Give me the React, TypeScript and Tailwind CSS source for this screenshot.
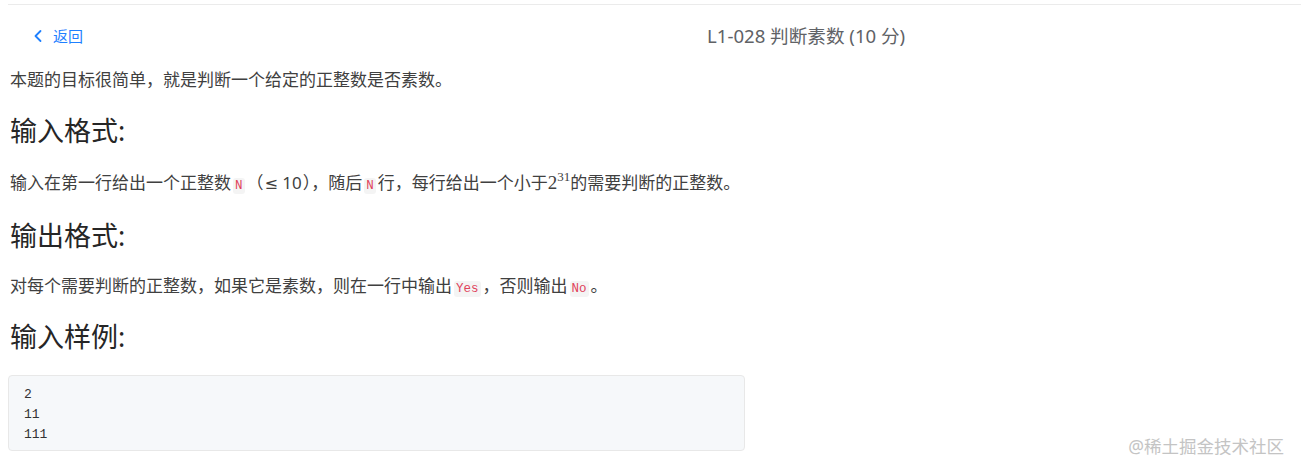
import { ChevronLeft } from 'lucide-react';

const cjk = { fontFamily: '"Noto Sans", "Noto Sans CJK SC", sans-serif' };

function Code({ children }: { children: React.ReactNode }) {
  return (
    <code className="mx-[2px] rounded-[3px] bg-[#f4f4f4] px-[2px] py-[1px] font-['Liberation_Mono',monospace] text-[12.5px] leading-none text-[#e0435b]">
      {children}
    </code>
  );
}

function Heading({ children }: { children: React.ReactNode }) {
  return <h2 className="mt-5 text-[27px] leading-[36px] font-normal text-[#262626]">{children}</h2>;
}

export default function App() {
  return (
    <div className="relative h-[475px] overflow-hidden bg-white text-[#404040]" style={cjk}>
      <div className="mt-1 ml-2 h-px bg-[#ebebeb]" />
      <div className="flex h-[62px] items-center pl-[28px]">
        <a className="flex items-center gap-[5px] text-[15px] text-[#1e80ff]">
          <ChevronLeft className="h-[20px] w-[20px]" strokeWidth={2.2} />
          返回
        </a>
        <div className="ml-[624px] text-[18.6px] text-[#606266]">L1-028 判断素数 (10 分)</div>
      </div>

      <div className="px-[10px]">
        <p className="text-[17px] leading-[26px]">本题的目标很简单，就是判断一个给定的正整数是否素数。</p>

        <Heading>输入格式:</Heading>
        <p className="mt-[21px] text-[17px] leading-[26px]">
          输入在第一行给出一个正整数<Code>N</Code>（<span className="mx-[1px]"><span className="font-['DejaVu_Sans',sans-serif] text-[16px]">≤</span> 10</span>），随后<Code>N</Code>行，每行给出一个小于
          <span className="font-['Liberation_Serif',serif] text-[19px]">
            2<span className="relative -top-[8px] text-[13px]">31</span>
          </span>
          的需要判断的正整数。
        </p>

        <Heading>输出格式:</Heading>
        <p className="mt-[19px] text-[17px] leading-[26px]">
          对每个需要判断的正整数，如果它是素数，则在一行中输出<Code>Yes</Code>，否则输出<Code>No</Code>。
        </p>

        <Heading>输入样例:</Heading>
        <pre className="mt-5 -ml-[2px] w-[737px] rounded-[4px] border border-[#e8e8e8] bg-[#f6f8fa] px-[15px] pt-[9px] pb-[5px] font-['Liberation_Mono',monospace] text-[13px] leading-[20px] text-[#333]">
          {'2\n11\n111'}
        </pre>
      </div>

      <div className="absolute right-[17px] bottom-[16px] text-[17.5px] text-[#c4c4c4]">@稀土掘金技术社区</div>
    </div>
  );
}
